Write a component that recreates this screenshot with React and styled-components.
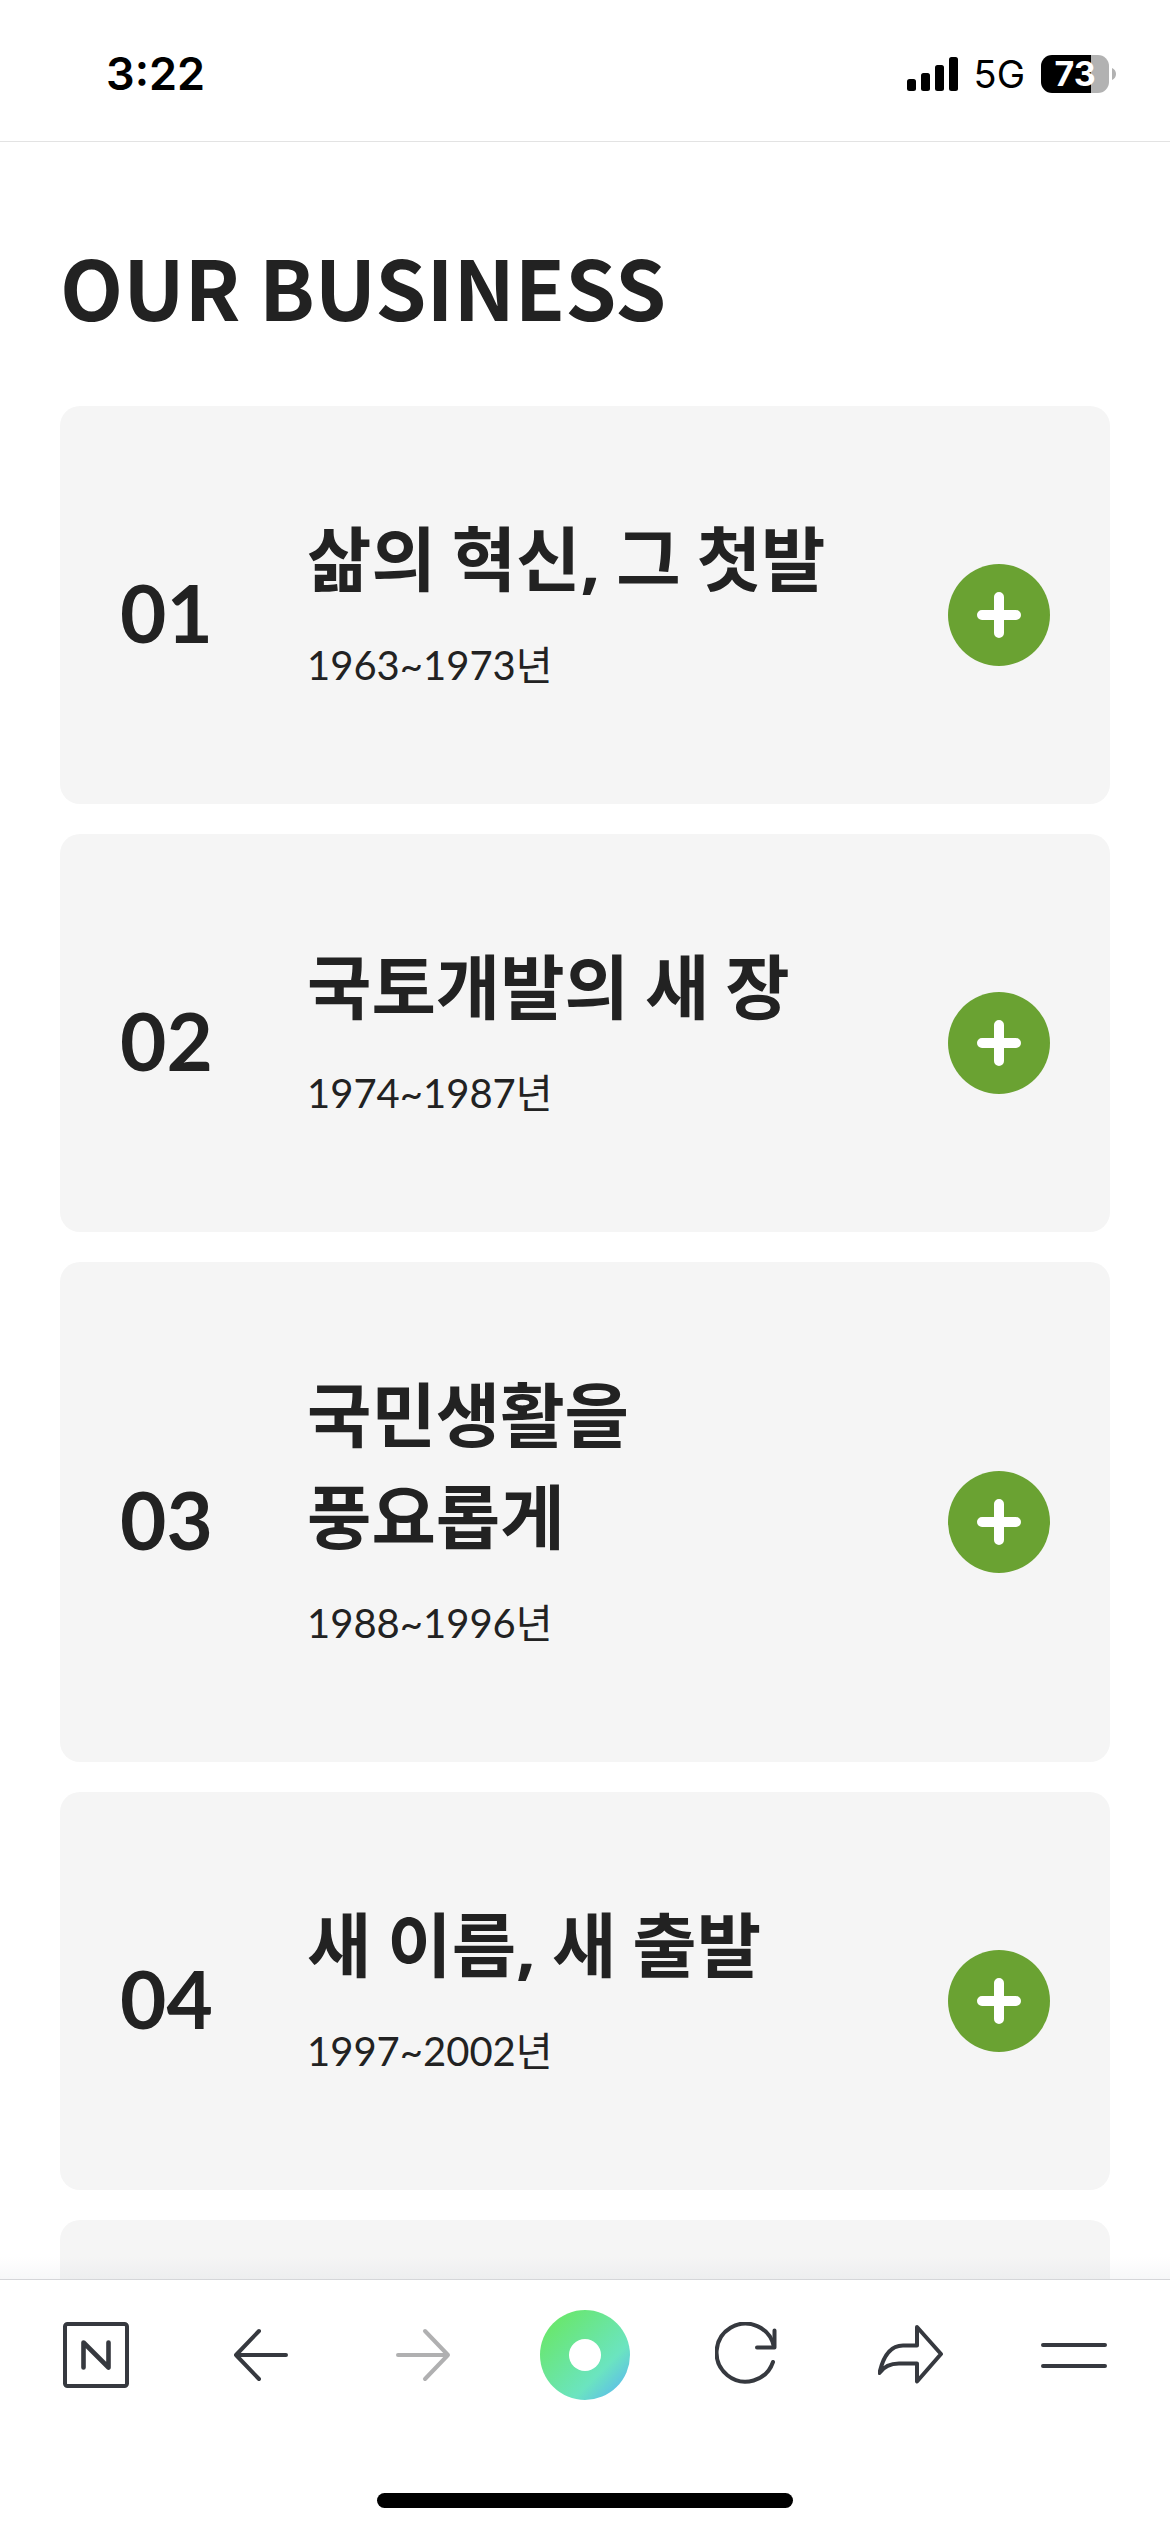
import React, { Fragment } from "react";
import styled, { createGlobalStyle } from "styled-components";

const GlobalStyle = createGlobalStyle`
  *, *::before, *::after { box-sizing: border-box; }
  html, body { margin: 0; padding: 0; background: #fff; }
  h1, h2, p, ul { margin: 0; padding: 0; }
  button { margin: 0; padding: 0; border: 0; background: none; cursor: pointer; }
`;

const Screen = styled.div`
  display: flex;
  flex-direction: column;
  height: 100vh;
  overflow: hidden;
  color: #222;
  font-family: "Noto Sans CJK KR", sans-serif;
`;

const StatusBar = styled.header`
  display: flex;
  flex: none;
  align-items: center;
  justify-content: space-between;
  height: 142px;
  padding: 7px 54px 0 106px;
  border-bottom: 1px solid #e3e3e3;
  color: #000;
  font-family: Inter, "Liberation Sans", sans-serif;
`;

const Clock = styled.time`
  font-size: 45px;
  font-weight: 600;
  line-height: 56px;
`;

const StatusGroup = styled.div`
  display: flex;
  align-items: center;
  gap: 16px;
`;

const Network = styled.span`
  font-size: 38px;
  line-height: 46px;
`;

const Battery = styled.div`
  display: flex;
  align-items: center;
  gap: 3px;
`;

const BatteryBody = styled.div`
  display: flex;
  align-items: center;
  justify-content: center;
  width: 68px;
  height: 38px;
  border-radius: 11px;
  background: linear-gradient(90deg, #000 73%, #b2b2b2 73%);
  color: #fff;
  font-size: 34px;
  font-weight: 700;
  line-height: 38px;
`;

const Content = styled.main`
  flex: 1;
  min-height: 0;
  overflow: hidden;
  padding: 84px 60px 0;
`;

const PageTitle = styled.h1`
  margin-bottom: 60px;
  font-size: 82px;
  font-weight: 700;
  line-height: 120px;
`;

const CardList = styled.ul`
  display: flex;
  flex-direction: column;
  gap: 30px;
  list-style: none;
`;

const Card = styled.li`
  display: grid;
  grid-template-columns: 127px 1fr 102px;
  column-gap: 60px;
  align-items: center;
  min-height: 398px;
  padding: 99px 60px 80px;
  border-radius: 20px;
  background: #f5f5f5;
`;

const CardNumber = styled.span`
  padding-bottom: 6px;
  font-family: Lato, sans-serif;
  font-size: 80px;
  font-weight: 700;
  line-height: 96px;
`;

const CardText = styled.div`
  padding-bottom: 29px;
`;

const CardTitle = styled.h2`
  margin-bottom: 28px;
  font-size: 70px;
  font-weight: 700;
  line-height: 102px;
  word-break: keep-all;
`;

const Comma = styled.span`
  font-family: "Noto Sans", sans-serif;
  line-height: 1;
`;

const CardPeriod = styled.p`
  font-family: Lato, "Noto Sans CJK KR", sans-serif;
  font-size: 40px;
  line-height: 60px;
`;

const ExpandButton = styled.button`
  display: grid;
  place-items: center;
  width: 102px;
  height: 102px;
  border-radius: 50%;
  background: #6aa232;
  color: #fff;
`;

const BottomBar = styled.footer`
  flex: none;
  position: relative;
  border-top: 1px solid #dcdcde;
  background: #fff;

  &::before {
    content: "";
    position: absolute;
    right: 0;
    bottom: 100%;
    left: 0;
    height: 24px;
    background: linear-gradient(rgba(40, 60, 90, 0), rgba(40, 60, 90, 0.04));
  }
`;

const Toolbar = styled.nav`
  display: grid;
  grid-template-columns: repeat(7, 1fr);
  align-items: center;
  height: 150px;
  padding: 0 14px;
`;

const ToolButton = styled.button`
  display: grid;
  place-items: center;
  color: ${(p) => (p.disabled ? "#b0b0b1" : "#36393f")};
`;

const HomeButton = styled.span`
  display: grid;
  place-items: center;
  width: 90px;
  height: 90px;
  border-radius: 50%;
  background: linear-gradient(135deg, #69e76b 12%, #6be4c0 68%, #5cbbec 92%);

  &::after {
    content: "";
    width: 32px;
    height: 32px;
    border-radius: 50%;
    background: #fff;
  }
`;

const HomeIndicator = styled.div`
  width: 416px;
  height: 15px;
  margin: 63px auto 24px;
  border-radius: 8px;
  background: #000;
`;

const Icon = ({ children }) => (
  <svg
    width="66"
    height="66"
    viewBox="0 0 66 66"
    fill="none"
    stroke="currentColor"
    strokeWidth="4"
    strokeLinecap="round"
    strokeLinejoin="round"
    aria-hidden="true"
  >
    {children}
  </svg>
);

const SignalIcon = () => (
  <svg width="51" height="34" viewBox="0 0 51 34" fill="currentColor" aria-hidden="true">
    <rect x="0" y="22" width="9" height="12" rx="2.5" />
    <rect x="14" y="16" width="9" height="18" rx="2.5" />
    <rect x="28" y="8" width="9" height="26" rx="2.5" />
    <rect x="42" y="0" width="9" height="34" rx="2.5" />
  </svg>
);

const BatteryTip = () => (
  <svg width="4" height="12" viewBox="0 0 4 12" fill="#b2b2b2" aria-hidden="true">
    <path d="M0 0C2.4 1 4 3.2 4 6s-1.6 5-4 6z" />
  </svg>
);

const PlusIcon = () => (
  <svg width="46" height="46" viewBox="0 0 46 46" stroke="currentColor" strokeWidth="10" strokeLinecap="round" aria-hidden="true">
    <path d="M23 5V41M6 23H40" />
  </svg>
);

const eras = [
  { number: "01", title: "삶의 혁신, 그 첫발", period: "1963~1973년" },
  { number: "02", title: "국토개발의 새 장", period: "1974~1987년" },
  { number: "03", title: "국민생활을 풍요롭게", period: "1988~1996년" },
  { number: "04", title: "새 이름, 새 출발", period: "1997~2002년" },
];

const EraCard = ({ number, title, period }) => (
  <Card>
    <CardNumber>{number}</CardNumber>
    <CardText>
      <CardTitle>
        {title.split(",").map((part, i) => (
          <Fragment key={part}>
            {i > 0 && <Comma>,</Comma>}
            {part}
          </Fragment>
        ))}
      </CardTitle>
      <CardPeriod>{period}</CardPeriod>
    </CardText>
    <ExpandButton type="button" aria-label={title}>
      <PlusIcon />
    </ExpandButton>
  </Card>
);

export default function App() {
  return (
    <Screen>
      <GlobalStyle />
      <StatusBar>
        <Clock>3:22</Clock>
        <StatusGroup>
          <SignalIcon />
          <Network>5G</Network>
          <Battery>
            <BatteryBody>73</BatteryBody>
            <BatteryTip />
          </Battery>
        </StatusGroup>
      </StatusBar>

      <Content>
        <PageTitle>OUR BUSINESS</PageTitle>
        <CardList>
          {eras.map((era) => (
            <EraCard key={era.number} {...era} />
          ))}
          <Card aria-hidden="true" />
        </CardList>
      </Content>

      <BottomBar>
        <Toolbar>
          <ToolButton type="button" aria-label="네이버">
            <Icon>
              <rect x="2" y="2" width="62" height="62" rx="2.5" />
              <path d="M20.5 45.5V20.5L45.5 45.5V20.5" strokeWidth="4.6" />
            </Icon>
          </ToolButton>
          <ToolButton type="button" aria-label="뒤로">
            <Icon>
              <path d="M60 33H10M33 9L10 33L33 57" />
            </Icon>
          </ToolButton>
          <ToolButton type="button" aria-label="앞으로" disabled>
            <Icon>
              <path d="M9 33H59M36 9L59 33L36 57" />
            </Icon>
          </ToolButton>
          <ToolButton type="button" aria-label="홈">
            <HomeButton />
          </ToolButton>
          <ToolButton type="button" aria-label="새로고침">
            <Icon>
              <path d="M58 40A29 29 0 1 1 59 25" />
              <path d="M59.5 8.5V25.5H42" />
            </Icon>
          </ToolButton>
          <ToolButton type="button" aria-label="공유">
            <Icon>
              <path d="M1.5 51C5 35 12 23.5 25 23.5H39V5L63 32L39 59.5V41.5H21C12 41.5 5.5 45 1.5 51Z" />
            </Icon>
          </ToolButton>
          <ToolButton type="button" aria-label="메뉴">
            <Icon>
              <path d="M2 23H64M2 44H64" />
            </Icon>
          </ToolButton>
        </Toolbar>
        <HomeIndicator />
      </BottomBar>
    </Screen>
  );
}
